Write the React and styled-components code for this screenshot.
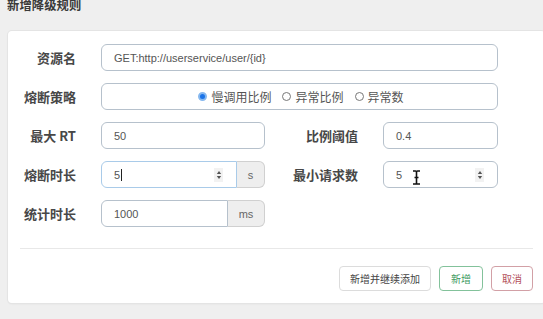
import React from "react";
import styled, { createGlobalStyle } from "styled-components";

const Global = createGlobalStyle`
  html, body { margin: 0; padding: 0; background: #efefef; overflow: hidden; }
  body { font-family: "Liberation Sans", Arial, "Noto Sans CJK SC", sans-serif; color: #333; }
  * { box-sizing: border-box; }
`;

const Page = styled.div`
  width: 543px;
  height: 319px;
  overflow: hidden;
  background: #efefef;
`;

const Title = styled.h4`
  margin: -3px 0 0 7px;
  font-size: 12.3px;
  line-height: 16px;
  font-weight: bold;
  color: #3a3a3a;
  letter-spacing: 0.1px;
  font-family: "Noto Sans CJK SC", sans-serif;
`;

const Card = styled.div`
  margin: 18px 0 0 8px;
  width: 537px;
  background: #fff;
  border-radius: 4px;
  box-shadow: 0 0 0 1px #e4e4e4, 0 1px 2px rgba(0, 0, 0, 0.08);
  padding: 13px 12px 12px 0;
`;

const Form = styled.div`
  display: flex;
  flex-direction: column;
  gap: 12px;
`;

const Row = styled.div`
  display: flex;
  align-items: center;
  height: 27px;
`;

const Label = styled.label`
  width: ${(p) => p.$w || 68}px;
  margin-right: 25px;
  text-align: right;
  font-size: 13px;
  font-weight: 600;
  color: #474747;
  white-space: nowrap;
  font-family: "Noto Sans CJK SC", "Liberation Sans", sans-serif;
`;

const Field = styled.div`
  position: relative;
  width: ${(p) => p.$w}px;
  height: 27px;
  display: flex;
  align-items: center;
  justify-content: ${(p) => (p.$center ? "center" : "space-between")};
  padding: 0 ${(p) => (p.$spin ? 13 : 12)}px 0 12px;
  border: 1px solid ${(p) => (p.$focus ? "#a9cbe9" : "#b6c1cc")};
  border-radius: ${(p) => (p.$group ? "6px 0 0 6px" : "6px")};
  font-size: 11px;
  color: #555;
  background: #fff;
`;

const Value = styled.span`
  display: inline-flex;
  align-items: center;
`;

const Caret = styled.span`
  display: inline-block;
  width: 1px;
  height: 12px;
  margin-left: 1px;
  background: #222;
`;

const Spinner = styled.span`
  width: 9px;
  height: 14px;
  background: #f2f2f2;
  display: flex;
  align-items: center;
  justify-content: center;
`;

const Addon = styled.div`
  width: ${(p) => p.$w}px;
  height: 27px;
  display: flex;
  align-items: center;
  justify-content: center;
  background: #eee;
  border: 1px solid #d0d0d0;
  border-left: none;
  border-radius: 0 6px 6px 0;
  font-size: 11px;
  color: #666;
`;

const Group = styled.div`
  display: flex;
`;

const Radios = styled.div`
  display: flex;
  align-items: center;
  gap: 11px;
  margin-left: 3px;
  font-size: 12px;
  color: #555;
  font-family: "Noto Sans CJK SC", sans-serif;
`;

const RadioItem = styled.span`
  display: inline-flex;
  align-items: center;
  gap: 4px;
`;

const Dot = styled.span`
  width: 9px;
  height: 9px;
  border-radius: 50%;
  border: ${(p) => (p.$on ? "2px solid #86b8ef" : "1px solid #777")};
  background: ${(p) => (p.$on ? "#1a73e8" : "#fff")};
`;

const Divider = styled.div`
  height: 1px;
  background: #e8e8e8;
  margin: 21px 0 0 12px;
`;

const Footer = styled.div`
  display: flex;
  justify-content: flex-end;
  gap: 8px;
  margin-top: 17px;
`;

const Button = styled.button`
  height: 25px;
  padding: 0 ${(p) => p.$pad || 10}px;
  border-radius: 4px;
  background: #fff;
  font-size: 10px;
  font-family: "Noto Sans CJK SC", sans-serif;
  border: 1px solid ${(p) => (p.$kind === "ok" ? "#83c29b" : p.$kind === "cancel" ? "#d2a0a6" : "#dcdcdc")};
  color: ${(p) => (p.$kind === "ok" ? "#3d9a62" : p.$kind === "cancel" ? "#b3505c" : "#444")};
  cursor: pointer;
`;

const Cursor = styled.svg`
  position: absolute;
  left: 28px;
  top: 8px;
`;

const SpinIcon = () => (
  <Spinner>
    <svg width="6" height="10" viewBox="0 0 6 10">
      <path d="M3 1 L5.2 4 L0.8 4 Z" fill="#555" />
      <path d="M3 9 L5.2 6 L0.8 6 Z" fill="#555" />
    </svg>
  </Spinner>
);

export default function App() {
  return (
    <Page>
      <Global />
      <Title>新增降级规则</Title>
      <Card>
        <Form>
          <Row>
            <Label>资源名</Label>
            <Field $w={397}>GET:http://userservice/user/{"{id}"}</Field>
          </Row>
          <Row>
            <Label>熔断策略</Label>
            <Field $w={397} $center>
              <Radios>
                <RadioItem>
                  <Dot $on />
                  慢调用比例
                </RadioItem>
                <RadioItem>
                  <Dot />
                  异常比例
                </RadioItem>
                <RadioItem>
                  <Dot />
                  异常数
                </RadioItem>
              </Radios>
            </Field>
          </Row>
          <Row>
            <Label>最大 RT</Label>
            <Field $w={164}>50</Field>
            <Label $w={93}>比例阈值</Label>
            <Field $w={115}>0.4</Field>
          </Row>
          <Row>
            <Label>熔断时长</Label>
            <Group>
              <Field $w={136} $group $focus $spin>
                <Value>
                  5<Caret />
                </Value>
                <SpinIcon />
              </Field>
              <Addon $w={28}>s</Addon>
            </Group>
            <Label $w={93}>最小请求数</Label>
            <Field $w={115} $spin>
              <Value>5</Value>
              <SpinIcon />
              <Cursor width="9" height="15" viewBox="0 0 9 15">
                <path d="M1 1 H3.5 Q4.5 1 4.5 2 Q4.5 1 5.5 1 H8 M4.5 2 V13 M1 14 H3.5 Q4.5 14 4.5 13 Q4.5 14 5.5 14 H8 M2.5 7.5 H6.5" stroke="#111" strokeWidth="1.6" fill="none" />
              </Cursor>
            </Field>
          </Row>
          <Row>
            <Label>统计时长</Label>
            <Group>
              <Field $w={127} $group>1000</Field>
              <Addon $w={37}>ms</Addon>
            </Group>
          </Row>
        </Form>
        <Divider />
        <Footer>
          <Button>新增并继续添加</Button>
          <Button $kind="ok" $pad={11}>新增</Button>
          <Button $kind="cancel" $pad={10}>取消</Button>
        </Footer>
      </Card>
    </Page>
  );
}
